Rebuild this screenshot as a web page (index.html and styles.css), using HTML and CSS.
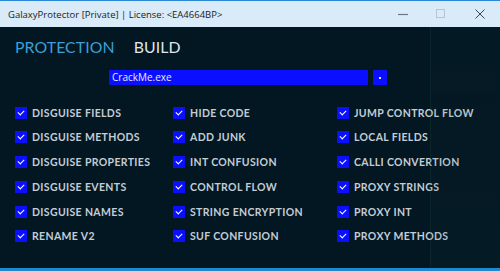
FILE: index.html
```html
<!DOCTYPE html>
<html>
<head>
<meta charset="utf-8">
<link rel="stylesheet" href="styles.css">
</head>
<body>
<div class="window">
  <div class="titlebar">
    <span class="title">GalaxyProtector [Private] | License: &lt;EA4664BP&gt;</span>
    <div class="controls">
      <span class="ctl"><svg width="10" height="10" viewBox="0 0 10 10"><line x1="0" y1="5.5" x2="10" y2="5.5" stroke="#6c7a88" stroke-width="1.2"/></svg></span>
      <span class="ctl"><svg width="10" height="10" viewBox="0 0 10 10"><rect x="0.5" y="0.5" width="8" height="8" fill="none" stroke="#b8c4d0" stroke-width="1"/></svg></span>
      <span class="ctl"><svg width="10" height="10" viewBox="0 0 10 10"><path d="M0.5 0.5 L9.5 9.5 M9.5 0.5 L0.5 9.5" stroke="#3a4450" stroke-width="1"/></svg></span>
    </div>
  </div>
  <div class="body">
    <div class="deco"></div>
    <div class="tabs">
      <span class="tab active">PROTECTION</span>
      <span class="tab">BUILD</span>
    </div>
    <div class="filerow">
      <div class="filebox">CrackMe.exe</div>
      <div class="filebtn"><span class="dot"></span></div>
    </div>
    <div class="grid">
      <div class="col c1">
        <label class="opt"><span class="cb"></span>DISGUISE FIELDS</label>
        <label class="opt"><span class="cb"></span>DISGUISE METHODS</label>
        <label class="opt"><span class="cb"></span>DISGUISE PROPERTIES</label>
        <label class="opt"><span class="cb"></span>DISGUISE EVENTS</label>
        <label class="opt"><span class="cb"></span>DISGUISE NAMES</label>
        <label class="opt"><span class="cb"></span>RENAME V2</label>
      </div>
      <div class="col c2">
        <label class="opt"><span class="cb"></span>HIDE CODE</label>
        <label class="opt"><span class="cb"></span>ADD JUNK</label>
        <label class="opt"><span class="cb"></span>INT CONFUSION</label>
        <label class="opt"><span class="cb"></span>CONTROL FLOW</label>
        <label class="opt"><span class="cb"></span>STRING ENCRYPTION</label>
        <label class="opt"><span class="cb"></span>SUF CONFUSION</label>
      </div>
      <div class="col c3">
        <label class="opt"><span class="cb"></span>JUMP CONTROL FLOW</label>
        <label class="opt"><span class="cb"></span>LOCAL FIELDS</label>
        <label class="opt"><span class="cb"></span>CALLI CONVERTION</label>
        <label class="opt"><span class="cb"></span>PROXY STRINGS</label>
        <label class="opt"><span class="cb"></span>PROXY INT</label>
        <label class="opt"><span class="cb"></span>PROXY METHODS</label>
      </div>
    </div>
  </div>
</div>
</body>
</html>
```

FILE: styles.css
```css
* { box-sizing: border-box; }
html, body { margin: 0; padding: 0; }
body { width: 500px; height: 271px; overflow: hidden; background: #021620; }
.window { width: 500px; height: 271px; display: flex; flex-direction: column; }
.titlebar {
  height: 27px;
  background: #d9eaf9;
  border-top: 1px solid #2b88d8;
  display: flex;
  align-items: center;
  justify-content: space-between;
  padding-left: 8px;
  font-family: "Open Sans", "Noto Sans", sans-serif;
  font-size: 9.5px;
  color: #1b1b1b;
}
.controls { display: flex; height: 100%; }
.ctl { width: 38px; display: flex; align-items: center; justify-content: center; }
.ctl:last-child { width: 40px; }
.body {
  position: relative;
  flex: 1;
  background: #021722;
  border-bottom: 3px solid #1e88d0;
  padding: 10px 0 0 15px;
  font-family: "Lato", "DejaVu Sans", sans-serif;
}
.deco {
  position: absolute;
  left: 430px; top: 0; right: 0; bottom: 0;
  background: linear-gradient(180deg, rgba(30,60,60,0.05), rgba(20,50,50,0.10));
  border-left: 1px solid rgba(40,90,70,0.2);
}
.tabs { display: flex; gap: 19px; height: 18px; align-items: center; }
.tab { font-size: 15.8px; letter-spacing: 0.1px; color: #dfe6ec; font-weight: 400; }
.tab.active { color: #3d9fd8; }
.filerow { display: flex; gap: 5px; margin-top: 15px; margin-left: 94px; height: 15px; }
.filebox {
  width: 259px; height: 15px; background: #0a10ff; color: #e8ecff;
  font-size: 10px; line-height: 15px; padding-left: 3px;
  font-family: "Open Sans", "Noto Sans", sans-serif;
}
.filebtn { width: 14px; height: 15px; background: #0a10ff; display: flex; align-items: center; justify-content: center; }
.dot { width: 2px; height: 2px; background: #dfe4ff; }
.grid { display: flex; margin-top: 21.5px; }
.col { display: flex; flex-direction: column; gap: 12.8px; }
.c1 { width: 158px; }
.c2 { width: 164px; }
.opt {
  display: flex; align-items: center; gap: 5px;
  height: 12px;
  font-size: 10.5px; font-weight: 700; letter-spacing: 0.35px;
  color: #c3cdd6;
  white-space: nowrap;
}
.cb {
  width: 12px; height: 12px; background: #0a10ff; position: relative; flex: none;
}
.cb::after {
  content: ""; position: absolute; left: 3px; top: 3px; width: 5px; height: 3px;
  border-left: 1.6px solid #fff; border-bottom: 1.6px solid #fff;
  transform: rotate(-45deg); transform-origin: center;
}
```
